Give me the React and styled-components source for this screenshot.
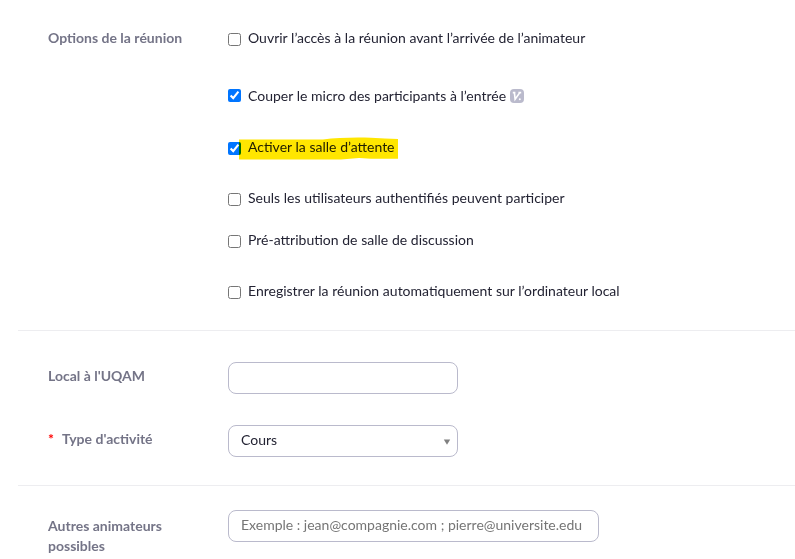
import React, { useState } from "react";
import styled, { createGlobalStyle } from "styled-components";

const GlobalStyle = createGlobalStyle`
  * {
    box-sizing: border-box;
  }
  body {
    margin: 0;
    background: #fff;
    overflow: hidden;
    font-family: Lato, "Liberation Sans", sans-serif;
    font-size: 14px;
    line-height: 20px;
    color: #232333;
  }
`;

const Form = styled.form`
  height: 559px;
  padding-left: 18px;
  overflow: hidden;
`;

const Section = styled.section`
  display: flex;
  flex-direction: column;
  gap: 31px;
  padding: ${(props) => props.$padding};
  border-bottom: 1px solid #ededf0;
  &:last-child {
    border-bottom: none;
  }
`;

const Field = styled.div`
  display: grid;
  grid-template-columns: 180px 1fr;
  align-items: start;
`;

const Label = styled.label`
  position: relative;
  width: 150px;
  padding-top: ${(props) => props.$offset || 0}px;
  padding-left: ${(props) => (props.$required ? 14 : 0)}px;
  font-weight: 700;
  color: #747487;
`;

const Star = styled.span`
  position: absolute;
  left: 0;
  top: ${(props) => props.$top}px;
  color: #ff0000;
`;

const OptionList = styled.ul`
  display: flex;
  flex-direction: column;
  margin: 0;
  padding: 0;
  list-style: none;
  word-spacing: 0.1px;
`;

const Option = styled.li`
  height: 20px;
  margin-top: ${(props) => props.$gap}px;
`;

const OptionLabel = styled.label`
  position: relative;
  display: inline-flex;
  align-items: flex-start;
  white-space: nowrap;
`;

const Checkbox = styled.input`
  width: 13px;
  height: 13px;
  margin: ${(props) => props.$top}px 7px 0 0;
`;

const Highlight = styled.svg`
  position: absolute;
  left: 11px;
  top: 0;
  mix-blend-mode: multiply;
  pointer-events: none;
`;

const LockIcon = styled.svg`
  margin: 3px 0 0 4px;
`;

const TextInput = styled.input`
  width: ${(props) => props.$width}px;
  height: 32px;
  padding: 0 12px 3px;
  border: 1px solid #babacc;
  border-radius: 8px;
  background: #fff;
  font: inherit;
  color: #232333;
  &::placeholder {
    color: #757575;
    opacity: 1;
  }
`;

const SelectBox = styled.button`
  display: flex;
  align-items: center;
  justify-content: space-between;
  width: 230px;
  height: 32px;
  padding: 0 6px 2px 12px;
  border: 1px solid #babacc;
  border-radius: 8px;
  background: #fff;
  font: inherit;
  color: #232333;
`;

const Arrow = styled.svg`
  margin-top: 4px;
`;

const options = [
  { text: "Ouvrir l’accès à la réunion avant l’arrivée de l’animateur", gap: 0, checked: false },
  { text: "Couper le micro des participants à l’entrée", gap: 38, checked: true, locked: true },
  { text: "Activer la salle d’attente", gap: 31, checked: true, highlighted: true },
  { text: "Seuls les utilisateurs authentifiés peuvent participer", gap: 31, checked: false },
  { text: "Pré-attribution de salle de discussion", gap: 22, checked: false },
  { text: "Enregistrer la réunion automatiquement sur l’ordinateur local", gap: 31, checked: false },
];

function VersionBadge() {
  return (
    <LockIcon width="14" height="14" viewBox="0 0 14 14">
      <rect width="14" height="14" rx="4" fill="#babacc" />
      <path
        d="M2.8 3.6h2.6M4.4 3.6l.7 6.6L9.8 3.6M8.4 3.6h2.8"
        fill="none"
        stroke="#fff"
        strokeWidth="1.6"
      />
      <circle cx="9.8" cy="10.3" r="1" fill="#fff" />
    </LockIcon>
  );
}

function MeetingOption({ text, gap, checked, locked, highlighted }) {
  const [isChecked, setIsChecked] = useState(checked);
  return (
    <Option $gap={gap}>
      <OptionLabel>
        <Checkbox
          type="checkbox"
          $top={locked ? 3 : 5}
          checked={isChecked}
          onChange={(e) => setIsChecked(e.target.checked)}
        />
        {text}
        {locked && <VersionBadge />}
        {highlighted && (
          <Highlight width="160" height="24" viewBox="0 0 160 24">
            <path
              d="M0 2.4H84C98 .8 116 0 132 .8L146 1.4 159 2V21.8H132L120 21 102 22.5H0Z"
              fill="#ffe600"
            />
          </Highlight>
        )}
      </OptionLabel>
    </Option>
  );
}

export default function App() {
  const [local, setLocal] = useState("");
  const [hosts, setHosts] = useState("");
  return (
    <>
      <GlobalStyle />
      <Form>
        <Section $padding="28px 0 29px 30px">
          <Field>
            <Label as="div">Options de la réunion</Label>
            <OptionList>
              {options.map((option) => (
                <MeetingOption key={option.text} {...option} />
              ))}
            </OptionList>
          </Field>
        </Section>
        <Section $padding="31px 0 28px 30px">
          <Field>
            <Label htmlFor="local" $offset={4}>
              Local à l'UQAM
            </Label>
            <TextInput
              id="local"
              $width={230}
              value={local}
              onChange={(e) => setLocal(e.target.value)}
            />
          </Field>
          <Field>
            <Label htmlFor="type" $offset={4} $required>
              <Star $top={4}>*</Star>
              Type d'activité
            </Label>
            <SelectBox id="type" type="button">
              Cours
              <Arrow width="8" height="6" viewBox="0 0 8 6">
                <path d="M.8 .5H7.2L4 5.8Z" fill="#808080" />
              </Arrow>
            </SelectBox>
          </Field>
        </Section>
        <Section $padding="24px 0 0 30px">
          <Field>
            <Label htmlFor="hosts" $offset={6}>
              Autres animateurs possibles
            </Label>
            <TextInput
              id="hosts"
              $width={371}
              placeholder="Exemple : jean@compagnie.com ; pierre@universite.edu"
              value={hosts}
              onChange={(e) => setHosts(e.target.value)}
            />
          </Field>
        </Section>
      </Form>
    </>
  );
}
